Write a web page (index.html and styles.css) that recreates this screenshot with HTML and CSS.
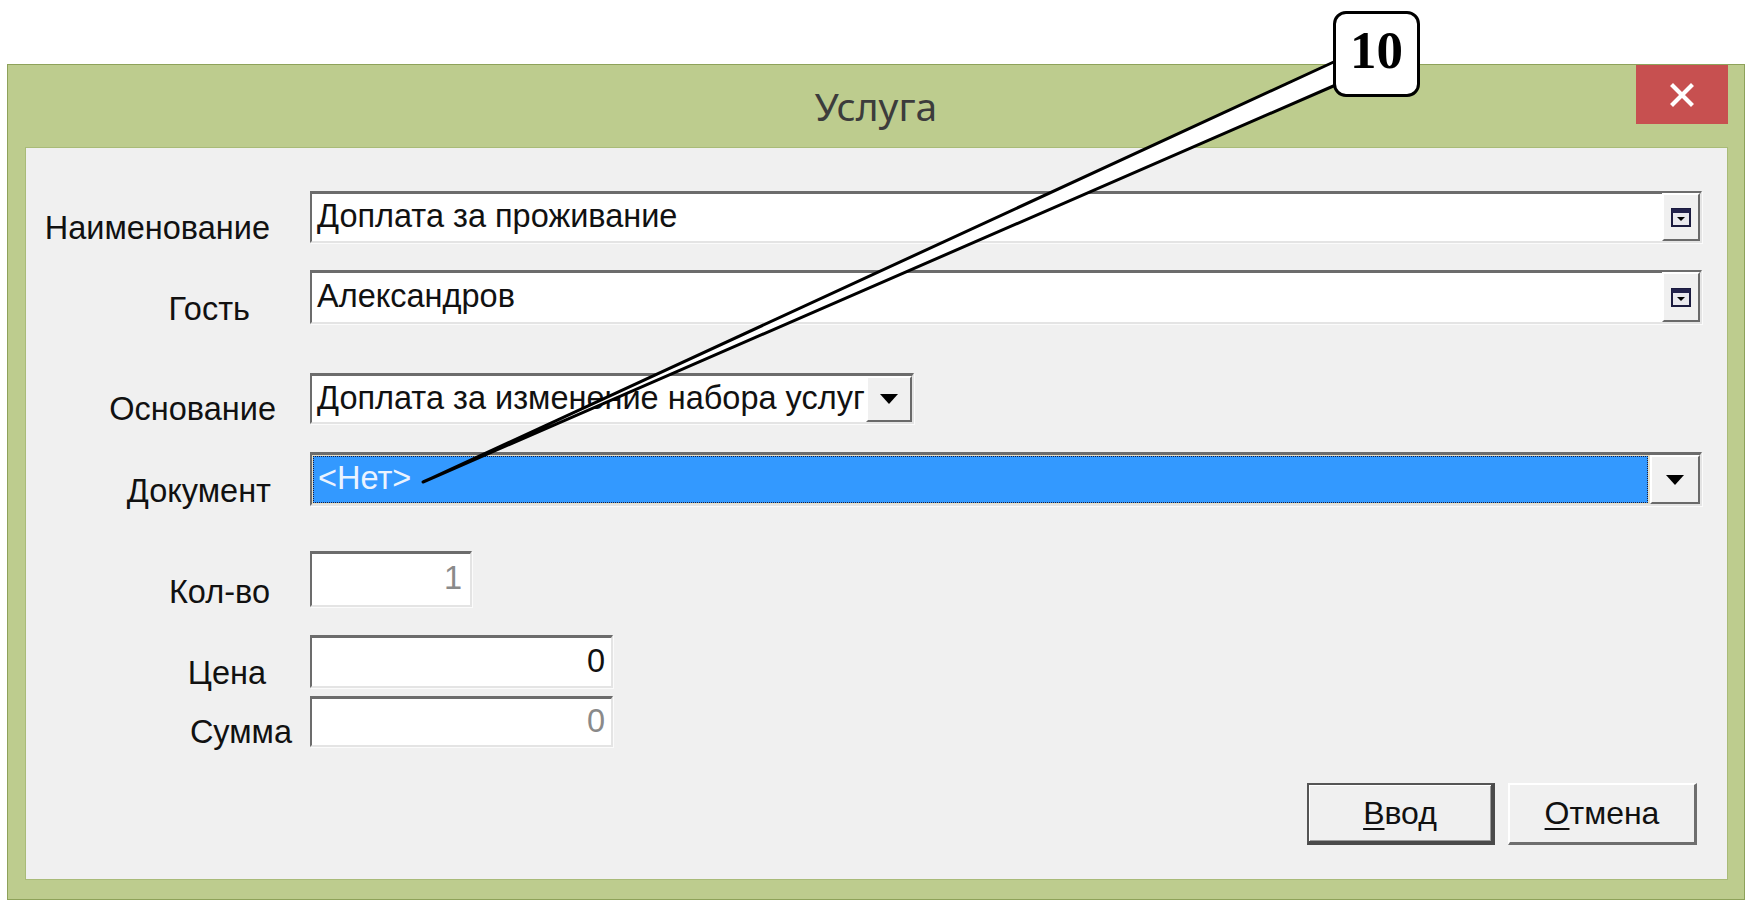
FILE: index.html
```html
<!DOCTYPE html>
<html lang="ru">
<head>
<meta charset="utf-8">
<title>Услуга</title>
<link rel="stylesheet" href="styles.css">
</head>
<body>
<div class="window">
  <div class="titlebar">
    <div class="title">Услуга</div>
    <div class="close">
      <svg width="24" height="24" viewBox="0 0 24 24"><path d="M3 3 L21 21 M21 3 L3 21" stroke="#fff" stroke-width="4.2" stroke-linecap="square"/></svg>
    </div>
  </div>
  <div class="panel">
    <div class="row r1">
      <div class="lbl l1">Наименование</div>
      <div class="field grow">
        <div class="val">Доплата за проживание</div>
        <div class="pick"><svg width="20" height="19" viewBox="0 0 20 19"><rect x="1" y="1" width="18" height="17" fill="#e9e9ee" stroke="#1b1b3f" stroke-width="2"/><rect x="1" y="1" width="18" height="4" fill="#23234d"/><path d="M6 9 H14 L10 13 Z" fill="#000"/></svg></div>
      </div>
    </div>
    <div class="row r2">
      <div class="lbl l2">Гость</div>
      <div class="field grow">
        <div class="val">Александров</div>
        <div class="pick"><svg width="20" height="19" viewBox="0 0 20 19"><rect x="1" y="1" width="18" height="17" fill="#e9e9ee" stroke="#1b1b3f" stroke-width="2"/><rect x="1" y="1" width="18" height="4" fill="#23234d"/><path d="M6 9 H14 L10 13 Z" fill="#000"/></svg></div>
      </div>
    </div>
    <div class="row r3">
      <div class="lbl l3">Основание</div>
      <div class="field w-base">
        <div class="val">Доплата за изменение набора услуг</div>
        <div class="drop"><svg width="18" height="10" viewBox="0 0 18 10"><path d="M0 0 H18 L9 10 Z" fill="#000"/></svg></div>
      </div>
    </div>
    <div class="row r4">
      <div class="lbl l4">Документ</div>
      <div class="field grow doc">
        <div class="val sel">&lt;Нет&gt;</div>
        <div class="drop wide"><svg width="18" height="10" viewBox="0 0 18 10"><path d="M0 0 H18 L9 10 Z" fill="#000"/></svg></div>
      </div>
    </div>
    <div class="row r5">
      <div class="lbl l5">Кол-во</div>
      <div class="field w-qty">
        <div class="val num qty dim">1</div>
      </div>
    </div>
    <div class="row r6">
      <div class="lbl l6">Цена</div>
      <div class="field w-price">
        <div class="val num">0</div>
      </div>
    </div>
    <div class="row r7">
      <div class="lbl l7">Сумма</div>
      <div class="field w-price">
        <div class="val num dim">0</div>
      </div>
    </div>
    <div class="actions">
      <button class="btn btn-default"><u>В</u>вод</button>
      <button class="btn"><u>О</u>тмена</button>
    </div>
  </div>
</div>

<svg class="leader" width="1763" height="903" viewBox="0 0 1763 903">
  <polygon points="1338,60 1338,84 423,482" fill="#fff" stroke="#000" stroke-width="3" stroke-linejoin="round"/>
</svg>
<div class="callout">10</div>
</body>
</html>
```

FILE: styles.css
```css
* { box-sizing: border-box; }

body {
  margin: 0;
  width: 1763px;
  height: 903px;
  overflow: hidden;
  position: relative;
  background: #ffffff;
  font-family: "Liberation Sans", Arial, sans-serif;
  color: #111;
}

.window {
  margin: 64px 0 0 7px;
  width: 1738px;
  height: 836px;
  background: #bdcc8e;
  border: 1px solid #8ea25a;
  display: flex;
  flex-direction: column;
}

.titlebar {
  height: 82px;
  display: grid;
  grid-template-columns: 1fr auto 1fr;
  align-items: center;
}

.title {
  grid-column: 2;
  font-family: "Noto Sans", "Open Sans", sans-serif;
  font-size: 39px;
  color: #3c3c3c;
  padding-bottom: 2px;
}

.close {
  grid-column: 3;
  justify-self: end;
  align-self: start;
  width: 92px;
  height: 59px;
  margin-right: 16px;
  background: #c75050;
  display: flex;
  align-items: center;
  justify-content: center;
}

.panel {
  flex: 1;
  margin: 0 16px 19px 17px;
  background: #f0f0f0;
  border: 1px solid #a9bb78;
  padding: 43px 25px 0 0;
  display: flex;
  flex-direction: column;
}

.row {
  display: flex;
}

.r1 { height: 52px; }
.r2 { height: 54px; margin-top: 27px; }
.r3 { height: 51px; margin-top: 49px; }
.r4 { height: 54px; margin-top: 28px; }
.r5 { height: 56px; margin-top: 45px; }
.r6 { height: 53px; margin-top: 28px; }
.r7 { height: 51px; margin-top: 8px; }

.lbl {
  width: 284px;
  flex: none;
  align-self: flex-end;
  text-align: right;
  font-size: 32.5px;
  line-height: 30px;
  color: #111;
  white-space: nowrap;
}
.l1 { padding-right: 40px; }
.l2 { padding-right: 60px; }
.l3 { padding-right: 34px; }
.l4 { padding-right: 39px; }
.l5 { padding-right: 40px; }
.l6 { padding-right: 44px; }
.l7 { padding-right: 18px; }

.field {
  display: flex;
  background: #ffffff;
  border-style: solid;
  border-width: 3px 2px 2px 2px;
  border-color: #6c6c6c #e4e4e4 #e4e4e4 #6c6c6c;
  box-shadow: 1px 1px 0 #fbfbfb;
}
.grow { flex: 1; }
.w-base { width: 604px; }
.w-qty { width: 162px; }
.w-price { width: 303px; }

.val {
  flex: 1;
  min-width: 0;
  display: flex;
  align-items: center;
  padding-left: 5px;
  padding-bottom: 2px;
  font-size: 32.5px;
  color: #111;
  white-space: nowrap;
  overflow: hidden;
}

.num {
  justify-content: flex-end;
  padding-right: 6px;
}
.qty { padding-right: 8px; }
.dim { color: #8a8a8a; }

.pick, .drop {
  flex: none;
  display: flex;
  align-items: center;
  justify-content: center;
  background: #f0f0f0;
  border-style: solid;
  border-width: 2px;
  border-color: #ffffff #6a6a6a #6a6a6a #ffffff;
}
.pick { width: 38px; margin-top: -1px; }
.drop { width: 46px; }
.drop.wide { width: 50px; }

.doc {
  background: #e7dfc7;
}
.sel {
  margin: 1px 2px 1px 1px;
  background: #3399ff;
  color: #eaf3ff;
  border: 1px dotted #1c1c3a;
  padding-left: 4px;
}

.actions {
  margin-top: 36px;
  display: flex;
  justify-content: flex-end;
  gap: 13px;
  padding-right: 5px;
}

.btn {
  width: 189px;
  height: 62px;
  font-family: "Liberation Sans", Arial, sans-serif;
  font-size: 32px;
  color: #111;
  background: #f0f0f0;
  border-style: solid;
  border-width: 2px 3px 3px 2px;
  border-color: #ffffff #6e6e6e #6e6e6e #ffffff;
  padding: 0;
}
.btn u {
  text-decoration-thickness: 2px;
  text-underline-offset: 4px;
}
.btn-default {
  width: 188px;
  border-width: 2px 4px 4px 2px;
  border-color: #555 #4a4a4a #4a4a4a #555;
  box-shadow: inset 1px 1px 0 #ffffff, inset -1px -1px 0 #9a9a9a;
}

.leader {
  position: absolute;
  left: 0;
  top: 0;
  pointer-events: none;
}

.callout {
  position: absolute;
  left: 1333px;
  top: 11px;
  width: 87px;
  height: 86px;
  border: 3px solid #000;
  border-radius: 13px;
  background: #fff;
  font-family: "Liberation Serif", "Times New Roman", serif;
  font-weight: bold;
  font-size: 53px;
  line-height: 1;
  display: flex;
  align-items: center;
  justify-content: center;
  padding-bottom: 8px;
  color: #000;
}
```
